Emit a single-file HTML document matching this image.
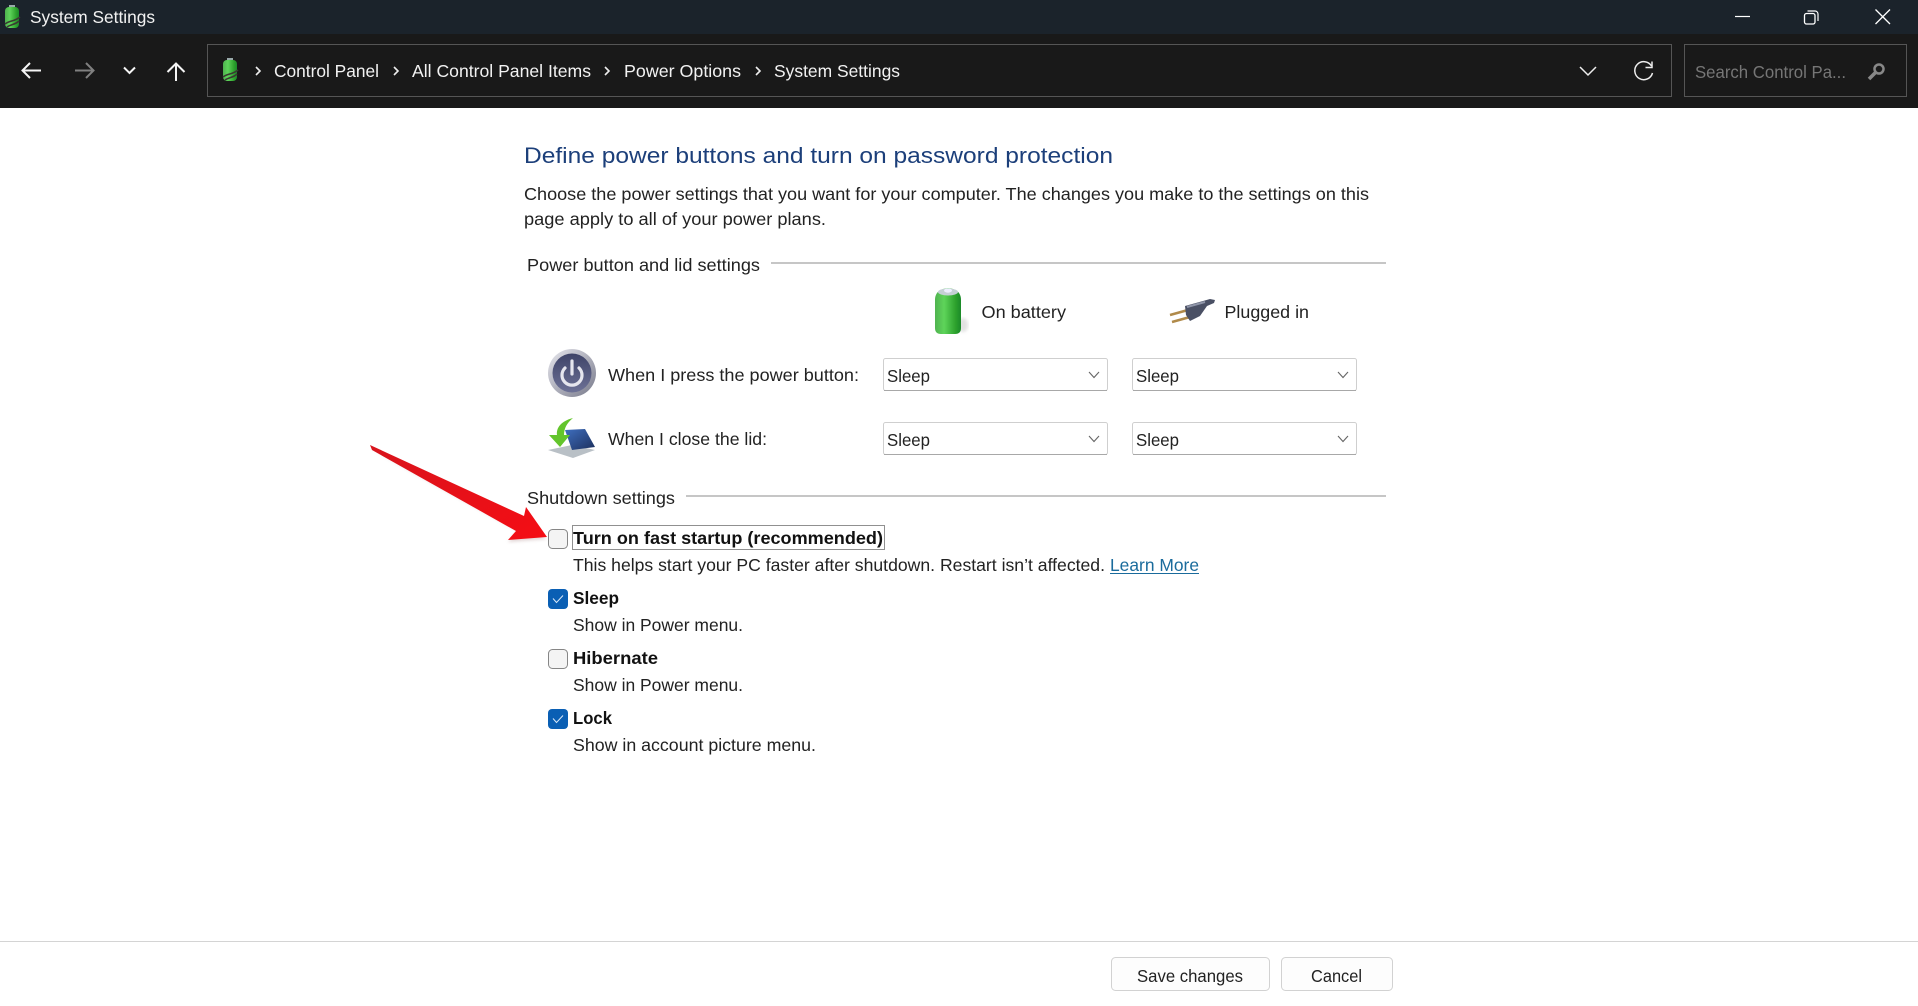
<!DOCTYPE html>
<html lang="en"><head><meta charset="utf-8"><title>System Settings</title>
<style>
html,body{margin:0;padding:0;background:#fff;width:1918px;height:1006px;overflow:hidden}
svg{display:block;position:absolute;left:0;top:0}
text{font-family:"Liberation Sans",sans-serif;font-size:17.5px;fill:#222}
.l{fill:#f2f2f2}.b{font-weight:bold;fill:#111}
</style></head><body>
<svg width="1918" height="1006" viewBox="0 0 1918 1006" xmlns="http://www.w3.org/2000/svg">
<defs>
<linearGradient id="g" x1="0" x2="1" y1="0" y2="0"><stop offset="0" stop-color="#4fb34f"/><stop offset=".35" stop-color="#5ed45a"/><stop offset=".8" stop-color="#2ca02c"/><stop offset="1" stop-color="#1b8a2a"/></linearGradient>
<linearGradient id="gs" x1="0" x2="1" y1="0" y2="1"><stop offset="0" stop-color="#e8e8ee"/><stop offset="1" stop-color="#77798a"/></linearGradient>
<linearGradient id="gp" x1="0" x2="0" y1="0" y2="1"><stop offset="0" stop-color="#3f4468"/><stop offset="1" stop-color="#6d7196"/></linearGradient>
<linearGradient id="ar" x1="0" x2="1" y1="0" y2="1"><stop offset="0" stop-color="#d8141c"/><stop offset="1" stop-color="#f50d14"/></linearGradient>
<linearGradient id="sc" x1="0" x2="1" y1="0" y2="1"><stop offset="0" stop-color="#3f6fc0"/><stop offset="1" stop-color="#1c2f5c"/></linearGradient>
<filter id="sh" x="-10%" y="-10%" width="120%" height="130%"><feGaussianBlur stdDeviation="1.5"/></filter>
</defs>

<rect width="1918" height="34" fill="#1b232b"/>
<rect y="34" width="1918" height="74" fill="#191919"/>
<rect y="108" width="1918" height="898" fill="#fff"/>

<!-- title icon -->
<rect x="9" y="5" width="6" height="3" fill="#9aa"/>
<rect x="5" y="7" width="14" height="21" rx="4" fill="url(#g)"/>
<path d="M5 24 C10 20 14 22 20 17 M7 27 C11 24 15 25 19 21" stroke="#3a3a32" stroke-width="1.600" fill="none"/>
<text x="30" y="23" textLength="125" lengthAdjust="spacingAndGlyphs" class="l">System Settings</text>

<!-- window controls -->
<path d="M1735 16.500h15" stroke="#fff" stroke-width="1.200"/>
<rect x="1804.500" y="13.500" width="10.500" height="10.500" rx="2" fill="none" stroke="#fff" stroke-width="1.300"/>
<path d="M1807.500 11h7.500a3 3 0 0 1 3 3v7" fill="none" stroke="#fff" stroke-width="1.200"/>
<path d="M1875.500 9.500 L1890 24 M1890 9.500 L1875.500 24" stroke="#fff" stroke-width="1.300"/>

<!-- nav -->
<path d="M41 70.500H23 M30 63 L22.500 70.500 L30 78" fill="none" stroke="#f5f5f5" stroke-width="2"/>
<path d="M75 70.500H93 M86 63 L93.500 70.500 L86 78" fill="none" stroke="#808080" stroke-width="2"/>
<path d="M124 67.500 L129.500 73 L135 67.500" fill="none" stroke="#f5f5f5" stroke-width="2"/>
<path d="M176 81V64 M167.500 72 L176 63.500 L184.500 72" fill="none" stroke="#f5f5f5" stroke-width="2"/>

<!-- address -->
<rect x="207.500" y="44.500" width="1464" height="52" fill="none" stroke="#555" stroke-width="1"/>
<rect x="227" y="58" width="6" height="3" fill="#9aa"/>
<rect x="223" y="60" width="14" height="21" rx="4" fill="url(#g)"/>
<path d="M223 77 C228 73 232 75 238 70 M225 80 C229 77 233 78 237 74" stroke="#3a3a32" stroke-width="1.600" fill="none"/>
<path d="M256 67 L260 71 L256 75 M394 67 L398 71 L394 75 M605 67 L609 71 L605 75 M756 67 L760 71 L756 75" fill="none" stroke="#eee" stroke-width="1.600"/>
<text x="274" y="77" textLength="105" lengthAdjust="spacingAndGlyphs" class="l">Control Panel</text>
<text x="412" y="77" textLength="179" lengthAdjust="spacingAndGlyphs" class="l">All Control Panel Items</text>
<text x="624" y="77" textLength="117" lengthAdjust="spacingAndGlyphs" class="l">Power Options</text>
<text x="774" y="77" textLength="126" lengthAdjust="spacingAndGlyphs" class="l">System Settings</text>
<path d="M1580 67 L1588 75 L1596 67" fill="none" stroke="#eee" stroke-width="1.500"/>
<path d="M1651.500 66 A9 9 0 1 0 1652.500 73" fill="none" stroke="#eee" stroke-width="1.500"/>
<path d="M1645.500 67.500 L1652 67.500 L1652 61.500" fill="none" stroke="#eee" stroke-width="1.500"/>

<!-- search -->
<rect x="1684.500" y="44.500" width="222" height="52" fill="none" stroke="#555" stroke-width="1"/>
<text x="1695" y="78" textLength="151" lengthAdjust="spacingAndGlyphs" style="fill:#767676">Search Control Pa...</text>
<circle cx="1879" cy="69" r="4.500" fill="none" stroke="#888" stroke-width="2.500"/>
<path d="M1875.500 72.500 L1869 79" stroke="#888" stroke-width="3.500"/>

<!-- heading -->
<text x="524" y="163" textLength="589" lengthAdjust="spacingAndGlyphs" style="font-size:22.5px;fill:#1c3f7a">Define power buttons and turn on password protection</text>
<text x="524" y="200" textLength="845" lengthAdjust="spacingAndGlyphs">Choose the power settings that you want for your computer. The changes you make to the settings on this</text>
<text x="524" y="225" textLength="302" lengthAdjust="spacingAndGlyphs">page apply to all of your power plans.</text>

<text x="527" y="271" textLength="233" lengthAdjust="spacingAndGlyphs">Power button and lid settings</text>
<rect x="771" y="262" width="615" height="2" fill="#c6c6c6"/>

<!-- battery -->
<ellipse cx="963" cy="325" rx="5" ry="7" fill="#cfcfcf" opacity=".6" filter="url(#sh)"/>
<path d="M935 300 C935 293 939 289 948 288 C957 289 961 293 961 300 V328 C961 332 959 334 955 334 H941 C937 334 935 332 935 328 Z" fill="url(#g)"/>
<ellipse cx="948" cy="292" rx="10" ry="3.500" fill="#c5d0d5"/>
<ellipse cx="948" cy="290.500" rx="4" ry="2.200" fill="#eef"/>
<text x="981.500" y="318" textLength="84.500" lengthAdjust="spacingAndGlyphs">On battery</text>

<!-- plug -->
<path d="M1170 315 L1188 310 M1172 322 L1190 317" stroke="#b08a4a" stroke-width="2.500"/>
<path d="M1185 306 L1203 301 L1210 299 L1215 300 L1214 303 L1207 306 L1200 316 L1190 321 L1186 315 Z" fill="#4a5064"/>
<path d="M1187 307 L1205 302" stroke="#8f95a8" stroke-width="2"/>
<text x="1224.500" y="318" textLength="84.500" lengthAdjust="spacingAndGlyphs">Plugged in</text>

<!-- power icon -->
<circle cx="572" cy="373" r="24" fill="url(#gs)"/>
<circle cx="572" cy="373" r="19.500" fill="url(#gp)"/>
<path d="M565 368 A10 10 0 1 0 579 368" fill="none" stroke="#e6e6ee" stroke-width="3.200" stroke-linecap="round"/>
<path d="M572 361 V374" stroke="#e6e6ee" stroke-width="3.200" stroke-linecap="round"/>
<text x="608" y="381" textLength="251" lengthAdjust="spacingAndGlyphs">When I press the power button:</text>

<!-- lid icon -->
<path d="M548 450 L572 445 L595 450 L573 458 Z" fill="#b9c0c6"/>
<path d="M565 430 L585 429 L595 447 L572 450 Z" fill="url(#sc)"/>
<path d="M573 418 C561 421 556 428 557 435 L549 435 L560 447 L570 435 L564 435 C564 428 567 423 573 418 Z" fill="#63c52c"/>
<text x="608" y="445" textLength="159" lengthAdjust="spacingAndGlyphs">When I close the lid:</text>

<!-- dropdowns -->
<g fill="#fff" stroke="#cfcfcf">
<rect x="883.500" y="358.500" width="224" height="32" rx="2"/>
<rect x="1132.500" y="358.500" width="224" height="32" rx="2"/>
<rect x="883.500" y="422.500" width="224" height="32" rx="2"/>
<rect x="1132.500" y="422.500" width="224" height="32" rx="2"/>
</g>
<g stroke="#a8a8a8"><path d="M884 390.500H1107 M1133 390.500H1356 M884 454.500H1107 M1133 454.500H1356"/></g>
<text x="887" y="382" textLength="43" lengthAdjust="spacingAndGlyphs">Sleep</text>
<text x="1136" y="382" textLength="43" lengthAdjust="spacingAndGlyphs">Sleep</text>
<text x="887" y="446" textLength="43" lengthAdjust="spacingAndGlyphs">Sleep</text>
<text x="1136" y="446" textLength="43" lengthAdjust="spacingAndGlyphs">Sleep</text>
<path d="M1089 372 L1094 377.500 L1099 372 M1338 372 L1343 377.500 L1348 372 M1089 436 L1094 441.500 L1099 436 M1338 436 L1343 441.500 L1348 436" fill="none" stroke="#666" stroke-width="1.100"/>

<!-- shutdown -->
<text x="527" y="504" textLength="148" lengthAdjust="spacingAndGlyphs">Shutdown settings</text>
<rect x="686" y="495" width="700" height="2" fill="#c6c6c6"/>

<!-- arrow -->
<path d="M371 449 L518 531 L508 542 L547 539 Z" fill="#a88" opacity=".35" filter="url(#sh)"/>
<polygon points="370,445 372,450 516,531 508,540 547,537 526,507 524,516" fill="url(#ar)"/>

<!-- checkboxes -->
<g fill="#f4f4f4" stroke="#868686" stroke-width="1">
<rect x="548.500" y="529.500" width="19" height="19" rx="4"/>
<rect x="548.500" y="649.500" width="19" height="19" rx="4"/>
</g>
<rect x="548" y="589" width="20" height="20" rx="4" fill="#0a5fb4"/>
<rect x="548" y="709" width="20" height="20" rx="4" fill="#0a5fb4"/>
<path d="M553 598.500 L556.500 602.500 L563 595.500 M553 718.500 L556.500 722.500 L563 715.500" fill="none" stroke="#d8e8f8" stroke-width="1"/>

<rect x="572.500" y="525.500" width="312" height="24" fill="none" stroke="#222" stroke-width="1" stroke-dasharray="1 1"/>
<text x="573" y="544" textLength="310" lengthAdjust="spacingAndGlyphs" class="b">Turn on fast startup (recommended)</text>
<text x="573" y="571" textLength="532" lengthAdjust="spacingAndGlyphs">This helps start your PC faster after shutdown. Restart isn’t affected.</text>
<text x="1110" y="571" textLength="89" lengthAdjust="spacingAndGlyphs" style="fill:#1a6b9c">Learn More</text>
<rect x="1110" y="573" width="89" height="1" fill="#1a6b9c"/>

<text x="573" y="604" textLength="46" lengthAdjust="spacingAndGlyphs" class="b">Sleep</text>
<text x="573" y="631" textLength="170" lengthAdjust="spacingAndGlyphs">Show in Power menu.</text>
<text x="573" y="664" textLength="85" lengthAdjust="spacingAndGlyphs" class="b">Hibernate</text>
<text x="573" y="691" textLength="170" lengthAdjust="spacingAndGlyphs">Show in Power menu.</text>
<text x="573" y="724" textLength="39" lengthAdjust="spacingAndGlyphs" class="b">Lock</text>
<text x="573" y="751" textLength="243" lengthAdjust="spacingAndGlyphs">Show in account picture menu.</text>

<!-- footer -->
<rect x="0" y="941" width="1918" height="1" fill="#d4d4d4"/>
<rect x="1111.500" y="957.500" width="158" height="33" rx="4" fill="#fdfdfd" stroke="#d2d2d2"/>
<rect x="1281.500" y="957.500" width="111" height="33" rx="4" fill="#fdfdfd" stroke="#d2d2d2"/>
<text x="1137" y="982" textLength="106" lengthAdjust="spacingAndGlyphs">Save changes</text>
<text x="1311" y="982" textLength="51" lengthAdjust="spacingAndGlyphs">Cancel</text>
</svg>
</body></html>
